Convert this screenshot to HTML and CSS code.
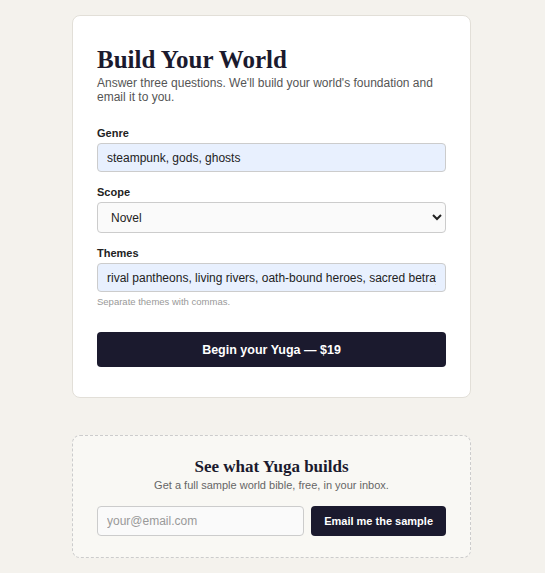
FILE: index.html
```html
<!DOCTYPE html>
<html lang="en">

<head>
     <meta charset="UTF-8">
     <meta name="viewport" content="width=device-width, initial-scale=1.0">
     <title>Yuga</title>
     <link rel="stylesheet" href="styles.css">
</head>

<body>
     <main class="page">
          <section class="card">
               <h1 class="title">Build Your World</h1>
               <p class="lead">Answer three questions. We'll build your world's foundation and email it to you.</p>
               <form class="form">
                    <label class="field">
                         <span class="label">Genre</span>
                         <input class="input filled" type="text" value="steampunk, gods, ghosts">
                    </label>
                    <label class="field">
                         <span class="label">Scope</span>
                         <select class="input select">
                              <option>Novel</option>
                              <option>Series</option>
                              <option>Short story</option>
                         </select>
                    </label>
                    <label class="field">
                         <span class="label">Themes</span>
                         <input class="input filled" type="text" value="rival pantheons, living rivers, oath-bound heroes, sacred betrayals">
                         <small class="hint">Separate themes with commas.</small>
                    </label>
                    <button class="btn btn-main" type="button">Begin your Yuga — $19</button>
               </form>
          </section>

          <section class="sample">
               <h2 class="sample-title">See what Yuga builds</h2>
               <p class="sample-lead">Get a full sample world bible, free, in your inbox.</p>
               <form class="sample-form">
                    <input class="input sample-input" type="email" placeholder="your@email.com">
                    <button class="btn btn-small" type="button">Email me the sample</button>
               </form>
          </section>
     </main>
</body>
</html>
```

FILE: styles.css
```css
html {
     box-sizing: border-box;
     font-family: "Liberation Sans", Arial, sans-serif;
     font-size: 16px;
}

*,
*:before,
*:after {
     box-sizing: inherit;
}

body {
     margin: 0;
     background-color: #f4f2ed;
     color: #1b1a2e;
}

.page {
     width: 399px;
     margin: 15px 0 0 72px;
}

.card {
     background-color: #fff;
     border: 1px solid #e2dfd8;
     border-radius: 8px;
     padding: 30px 24px 30px;
}

.title {
     font-family: "Liberation Serif", "Times New Roman", serif;
     font-size: 25px;
     font-weight: bold;
     margin: 0;
     line-height: 28px;
     color: #1b1a2e;
}

.lead {
     margin: 2px 0 0;
     font-size: 12px;
     line-height: 14px;
     color: #555;
}

.form {
     margin-top: 23px;
     display: flex;
     flex-direction: column;
}

.field {
     display: flex;
     flex-direction: column;
     margin-bottom: 14px;
}

.label {
     font-size: 11px;
     font-weight: bold;
     color: #222;
     margin-bottom: 4px;
}

.input {
     width: 100%;
     height: 29px;
     padding: 0 9px;
     font-family: inherit;
     font-size: 12px;
     color: #222;
     background-color: #fafafa;
     border: 1px solid #ccc;
     border-radius: 4px;
}

.filled {
     background-color: #e8f0fe;
}

.select {
     height: 31px;
     padding: 0 6px 0 9px;
}

.hint {
     margin-top: 4px;
     font-size: 9.5px;
     color: #999;
}

.btn {
     font-family: inherit;
     font-weight: bold;
     color: #fff;
     background-color: #1b1a2e;
     border: 0;
     border-radius: 4px;
     cursor: pointer;
}

.btn-main {
     margin-top: 11px;
     height: 35px;
     font-size: 12.5px;
}

.sample {
     margin-top: 37px;
     background-color: #f9f8f4;
     border: 1px dashed #ccc;
     border-radius: 8px;
     padding: 21px 24px 21px;
     text-align: center;
}

.sample-title {
     font-family: "Liberation Serif", "Times New Roman", serif;
     font-size: 17px;
     line-height: 20px;
     margin: 0;
}

.sample-lead {
     margin: 2px 0 0;
     font-size: 11px;
     color: #666;
}

.sample-form {
     margin-top: 15px;
     display: flex;
     gap: 7px;
}

.sample-input {
     flex-grow: 1;
     width: auto;
     height: 30px;
}

.sample-input::placeholder {
     color: #999;
}

.btn-small {
     height: 30px;
     padding: 0 13px;
     font-size: 11px;
}
```
